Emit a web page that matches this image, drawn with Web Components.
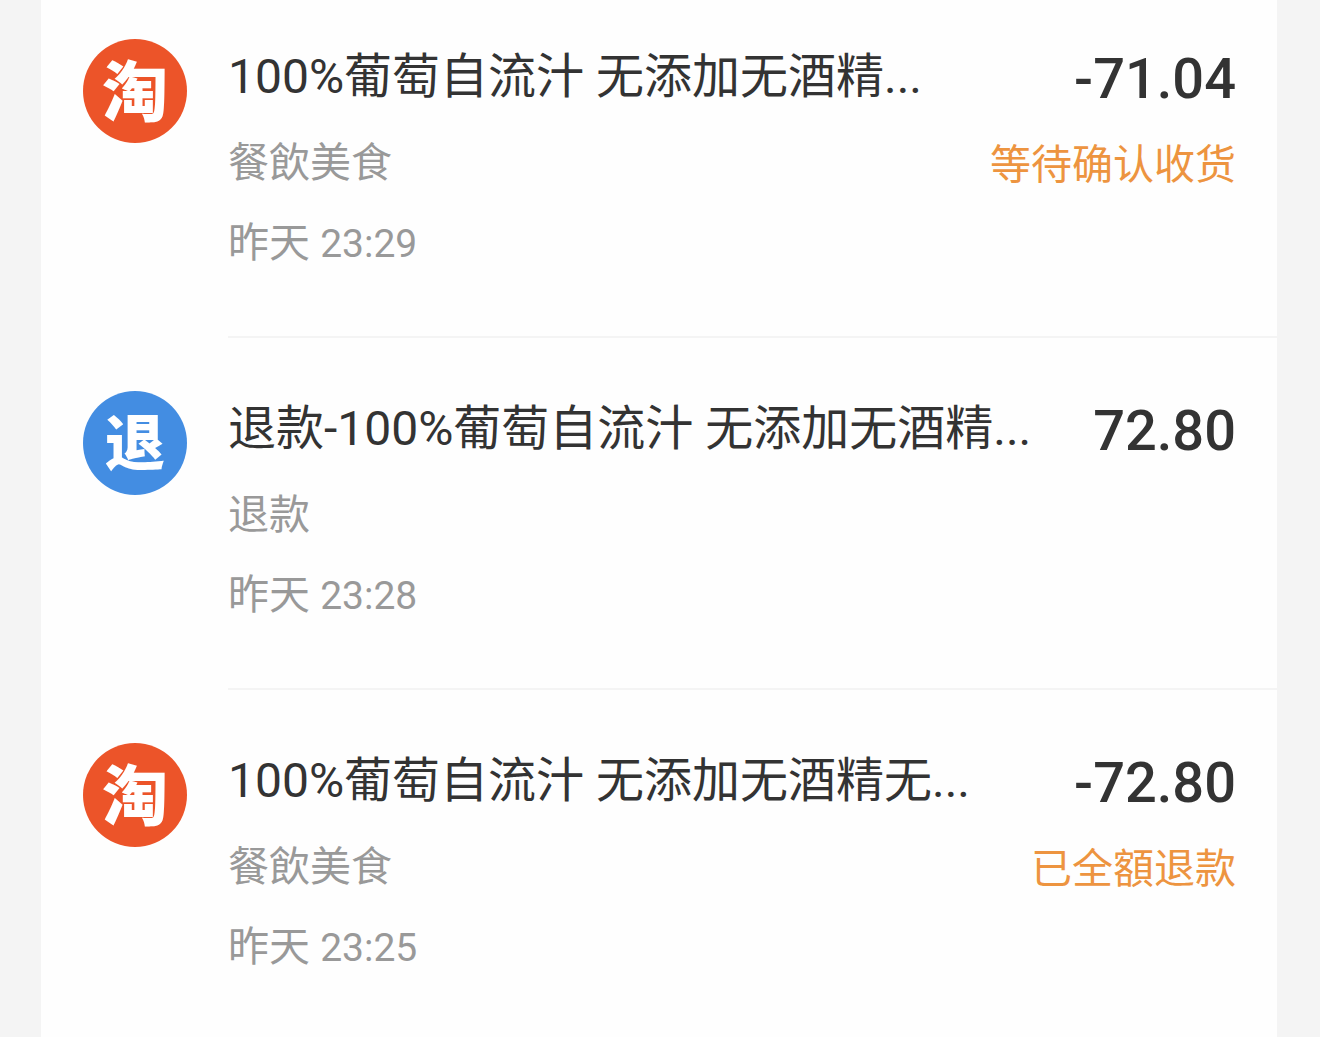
<!DOCTYPE html>
<html lang="zh">
<head>
<meta charset="utf-8">
<title>账单</title>
<style>
  body {
    margin: 0;
    background: #f4f4f4;
    font-family: Roboto, "Noto Sans CJK SC", sans-serif;
    color: #333;
  }
</style>
</head>
<body>
<bill-list>
  <bill-item>
    <brand-badge slot="icon" kind="shop">淘</brand-badge>
    <span slot="title">100%葡萄自流汁 无添加无酒精...</span>
    <span slot="category">餐飲美食</span>
    <bill-time slot="time" day="昨天" clock="23:29"></bill-time>
    <span slot="amount">-71.04</span>
    <span slot="status">等待确认收货</span>
  </bill-item>
  <bill-item>
    <brand-badge slot="icon" kind="refund">退</brand-badge>
    <span slot="title">退款-100%葡萄自流汁 无添加无酒精...</span>
    <span slot="category">退款</span>
    <bill-time slot="time" day="昨天" clock="23:28"></bill-time>
    <span slot="amount">72.80</span>
  </bill-item>
  <bill-item>
    <brand-badge slot="icon" kind="shop">淘</brand-badge>
    <span slot="title">100%葡萄自流汁 无添加无酒精无...</span>
    <span slot="category">餐飲美食</span>
    <bill-time slot="time" day="昨天" clock="23:25"></bill-time>
    <span slot="amount">-72.80</span>
    <span slot="status">已全額退款</span>
  </bill-item>
</bill-list>

<script>
  class BillList extends HTMLElement {
    constructor() {
      super();
      this.attachShadow({ mode: "open" }).innerHTML = `
        <style>
          :host { display: block; padding: 0 43px 0 41px; }
          main { background: #fefefe; min-height: 100vh; }
          ::slotted(:first-child) { --row-top: 39px; }
          ::slotted(:last-child) { --row-bottom: 40px; --row-line: none; }
        </style>
        <main><slot></slot></main>`;
    }
  }

  class BillItem extends HTMLElement {
    constructor() {
      super();
      this.attachShadow({ mode: "open" }).innerHTML = `
        <style>
          :host { display: block; white-space: nowrap; }
          article { display: flex; gap: 41px; padding-left: 42px; }
          .icon { flex: none; padding-top: var(--row-top, 53px); }
          .body {
            flex: 1; min-width: 0;
            display: flex; justify-content: space-between; gap: 24px;
            padding: var(--row-top, 53px) 41px var(--row-bottom, 53px) 0;
            border-bottom: var(--row-line, 2px solid #f4f4f4);
          }
          .text, .sum { display: flex; flex-direction: column; }
          .text { min-width: 0; }
          .sum { flex: none; align-items: flex-end; }
          h2 { margin: 0 0 8px; font-size: 48px; line-height: 76px; font-weight: 400; }
          p { margin: 0; font-size: 41px; line-height: 80px; color: #999; }
          .amount { margin-bottom: 6px; font-size: 56px; line-height: 80px; font-weight: 500; color: #333; }
          .status { color: #ed9440; }
        </style>
        <article>
          <div class="icon"><slot name="icon"></slot></div>
          <div class="body">
            <div class="text">
              <h2><slot name="title"></slot></h2>
              <p><slot name="category"></slot></p>
              <p><slot name="time"></slot></p>
            </div>
            <div class="sum">
              <p class="amount"><slot name="amount"></slot></p>
              <p class="status"><slot name="status"></slot></p>
            </div>
          </div>
        </article>`;
    }
  }

  class BillTime extends HTMLElement {
    constructor() {
      super();
      this.attachShadow({ mode: "open" }).innerHTML = `
        <style>
          :host { display: inline; }
          .clock { font-size: 39px; line-height: 1; }
        </style>
        <time>${this.getAttribute("day")} <span class="clock">${this.getAttribute("clock")}</span></time>`;
    }
  }

  class BrandBadge extends HTMLElement {
    constructor() {
      super();
      const shop = this.getAttribute("kind") === "shop";
      this.attachShadow({ mode: "open" }).innerHTML = `
        <style>
          :host {
            display: flex; align-items: center; justify-content: center;
            width: 104px; height: 104px; border-radius: 50%;
            background: ${shop ? "#ec5429" : "#438de2"};
            color: #fff; font-family: "Noto Sans CJK SC", sans-serif;
            font-size: ${shop ? 66 : 60}px; line-height: 96px; font-weight: 900;
          }
          span { padding-bottom: 8px; }
        </style>
        <span><slot></slot></span>`;
    }
  }

  customElements.define("bill-list", BillList);
  customElements.define("bill-item", BillItem);
  customElements.define("bill-time", BillTime);
  customElements.define("brand-badge", BrandBadge);
</script>
</body>
</html>
